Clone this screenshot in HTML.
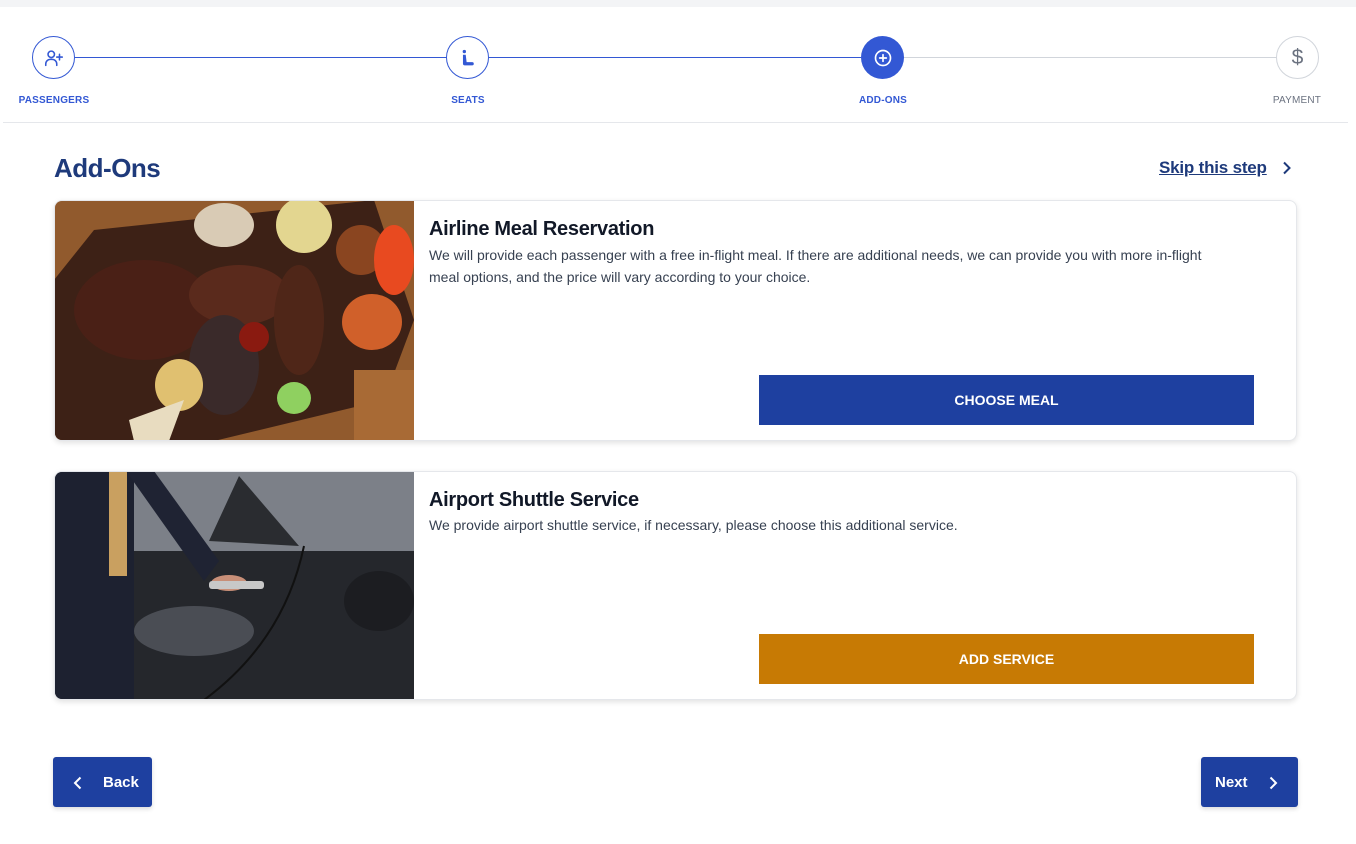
<!DOCTYPE html>
<html><head><meta charset="utf-8"><style>
*{box-sizing:border-box;margin:0;padding:0}
body{width:1356px;height:844px;background:#fff;font-family:"Liberation Sans",sans-serif;position:relative;overflow:hidden;color:#1f2937}
.topbar{position:absolute;left:0;top:0;width:1356px;height:7px;background:#f3f4f6}
.line{position:absolute;top:57px;height:1px}
.circ{position:absolute;width:43px;height:43px;border-radius:50%;top:36px;display:flex;align-items:center;justify-content:center;background:#fff}
.lbl{position:absolute;top:95px;font-size:10px;font-weight:bold;color:#3358d4;width:120px;text-align:center;letter-spacing:0.2px}
.divider{position:absolute;left:3px;top:122px;width:1345px;height:1px;background:#e5e7eb}
h1{position:absolute;left:54px;top:153px;font-size:26px;font-weight:bold;color:#1e3a7b;letter-spacing:-0.5px}
.skip{position:absolute;left:1159px;top:158px;font-size:17px;font-weight:bold;color:#1e3a7b;text-decoration:underline;letter-spacing:-0.2px}
.card{position:absolute;left:54px;width:1243px;border:1px solid #e5e7eb;border-radius:8px;box-shadow:0 2px 6px rgba(0,0,0,0.12);overflow:hidden;background:#fff}
.card .img{position:absolute;left:-1px;top:-1px;width:360px;height:calc(100% + 2px)}
.card h2{position:absolute;left:374px;top:17px;font-size:20px;font-weight:bold;color:#111827;letter-spacing:-0.3px}
.card p{position:absolute;left:374px;top:43px;width:805px;font-size:14px;line-height:22px;color:#374151}
.btn{position:absolute;left:704px;width:495px;height:50px;color:#fff;font-weight:bold;font-size:14px;display:flex;align-items:center;justify-content:center}
.nav{position:absolute;top:757px;height:50px;background:#1e40a0;border-radius:3px;color:#fff;font-weight:bold;font-size:15px;box-shadow:0 2px 5px rgba(0,0,0,0.15)}
</style></head><body>
<div class="topbar"></div>
<div class="line" style="left:75px;width:372px;background:#3358d4"></div>
<div class="line" style="left:489px;width:372px;background:#3358d4"></div>
<div class="line" style="left:903px;width:373px;background:#d1d5db"></div>

<div class="circ" style="left:32px;border:1.3px solid #3358d4">
<svg width="22" height="22" viewBox="0 0 24 24" fill="none" stroke="#3358d4" stroke-width="1.7" stroke-linecap="round"><circle cx="9" cy="8" r="3.5"/><path d="M3 20v-1.5a5 5 0 0 1 5-5h2a5 5 0 0 1 5 5V20"/><path d="M18 8v6M15 11h6"/></svg></div>
<div class="circ" style="left:446px;border:1.3px solid #3358d4">
<svg width="22" height="22" viewBox="0 0 24 24" fill="#3358d4"><circle cx="8" cy="5" r="1.8"/><path d="M6.5 8.5h3l1 8h6a1.8 1.8 0 0 1 0 3.6h-8a2 2 0 0 1-2-1.8z"/></svg></div>
<div class="circ" style="left:861px;background:#3358d4">
<svg width="20" height="20" viewBox="0 0 24 24" fill="none" stroke="#fff" stroke-width="2" stroke-linecap="round"><circle cx="12" cy="12" r="9"/><path d="M12 8v8M8 12h8"/></svg></div>
<div class="circ" style="left:1276px;border:1px solid #d1d5db">
<span style="font-size:21px;color:#6b7280">$</span></div>

<div class="lbl" style="left:-6px">PASSENGERS</div>
<div class="lbl" style="left:408px">SEATS</div>
<div class="lbl" style="left:823px">ADD-ONS</div>
<div class="lbl" style="left:1237px;color:#6b7280;font-weight:normal">PAYMENT</div>
<div class="divider"></div>

<h1>Add-Ons</h1>
<div class="skip">Skip this step</div>
<svg style="position:absolute;left:1281px;top:161px" width="12" height="14" viewBox="0 0 12 14" fill="none" stroke="#1e3a7b" stroke-width="2"><path d="M3 1.5l5.5 5.5L3 12.5"/></svg>

<div class="card" style="top:200px;height:241px">
<svg class="img" viewBox="0 0 360 241" preserveAspectRatio="none">
<rect width="360" height="241" fill="#7a4a24"/>
<rect x="0" y="0" width="360" height="241" fill="#a86a35" opacity=".5"/>
<polygon points="40,30 320,0 360,120 330,200 160,241 0,241 0,80" fill="#3d2116"/>
<ellipse cx="90" cy="110" rx="70" ry="50" fill="#4a2016"/>
<ellipse cx="185" cy="95" rx="50" ry="30" fill="#5a2a1c"/>
<ellipse cx="245" cy="120" rx="25" ry="55" fill="#4f2618"/>
<ellipse cx="170" cy="165" rx="35" ry="50" fill="#3a2a2a"/>
<ellipse cx="170" cy="25" rx="30" ry="22" fill="#d9cbb5"/>
<ellipse cx="250" cy="25" rx="28" ry="28" fill="#e3d690"/>
<ellipse cx="307" cy="50" rx="25" ry="25" fill="#8a4520"/>
<ellipse cx="340" cy="60" rx="20" ry="35" fill="#e84a20"/>
<ellipse cx="318" cy="122" rx="30" ry="28" fill="#d0602a"/>
<ellipse cx="125" cy="185" rx="24" ry="26" fill="#e0c070"/>
<ellipse cx="240" cy="198" rx="17" ry="16" fill="#8fd060"/>
<ellipse cx="200" cy="137" rx="15" ry="15" fill="#8a1a10"/>
<polygon points="75,220 130,200 115,241 80,241" fill="#e8dcc0"/>
<rect x="300" y="170" width="60" height="71" fill="#a86a35"/>
</svg>
<h2>Airline Meal Reservation</h2>
<p>We will provide each passenger with a free in-flight meal. If there are additional needs, we can provide you with more in-flight meal options, and the price will vary according to your choice.</p>
<div class="btn" style="top:174px;background:#1e40a0">CHOOSE MEAL</div>
</div>

<div class="card" style="top:471px;height:229px">
<svg class="img" viewBox="0 0 360 229" preserveAspectRatio="none">
<rect width="360" height="229" fill="#3a3d44"/>
<rect x="75" y="0" width="285" height="80" fill="#7c8088"/>
<polygon points="155,70 185,5 245,75" fill="#2a2c30"/>
<rect x="75" y="80" width="285" height="149" fill="#25272c"/>
<ellipse cx="140" cy="160" rx="60" ry="25" fill="#4a4d54"/>
<ellipse cx="325" cy="130" rx="35" ry="30" fill="#1c1d21"/>
<path d="M250 75 Q230 170 150 229" stroke="#111" stroke-width="2" fill="none"/>
<rect x="0" y="0" width="80" height="229" fill="#1d2130"/>
<rect x="55" y="0" width="18" height="105" fill="#c9a060"/>
<polygon points="72,0 100,0 165,90 150,110" fill="#1f2333"/>
<ellipse cx="175" cy="112" rx="18" ry="8" fill="#c88f78"/>
<rect x="155" y="110" width="55" height="8" rx="3" fill="#c8c8c8"/>
</svg>
<h2>Airport Shuttle Service</h2>
<p style="top:42px">We provide airport shuttle service, if necessary, please choose this additional service.</p>
<div class="btn" style="top:162px;background:#c77a04">ADD SERVICE</div>
</div>

<div class="nav" style="left:53px;width:99px">
<svg style="position:absolute;left:20px;top:19px" width="10" height="14" viewBox="0 0 10 14" fill="none" stroke="#fff" stroke-width="2"><path d="M7.5 1.5L2 7l5.5 5.5"/></svg>
<span style="position:absolute;left:50px;top:17px">Back</span></div>
<div class="nav" style="left:1201px;width:97px">
<span style="position:absolute;left:14px;top:17px">Next</span>
<svg style="position:absolute;left:67px;top:19px" width="10" height="14" viewBox="0 0 10 14" fill="none" stroke="#fff" stroke-width="2"><path d="M2.5 1.5L8 7l-5.5 5.5"/></svg></div>
</body></html>
